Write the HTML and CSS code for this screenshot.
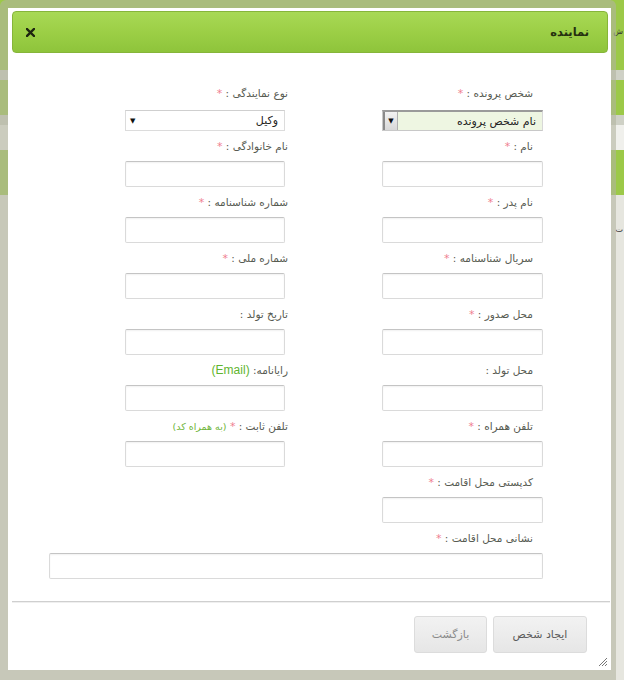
FILE: index.html
```html
<!DOCTYPE html>
<html lang="fa" dir="rtl">
<head>
<meta charset="utf-8">
<title>نماینده</title>
<link rel="stylesheet" href="styles.css">
</head>
<body>
<div class="page">
  <div class="band band-green b1"><span class="peek">ش</span></div>
  <div class="band band-gray b2"></div>
  <div class="band band-green b3"></div>
  <div class="band band-gray b4"></div>
  <div class="band band-light b5"></div>
  <div class="band band-green b6"></div>
  <div class="band band-rest"><span class="peek peek2">ت</span></div>
</div>

<div class="dialog">
  <div class="titlebar">
    <span class="title">نماینده</span>
    <span class="close" aria-label="بستن">
      <svg width="9" height="9" viewBox="0 0 9 9"><path d="M1 1 L8 8 M8 1 L1 8" stroke="#1d2410" stroke-width="2.4" stroke-linecap="square"/></svg>
    </span>
  </div>

  <div class="content">
    <div class="grid">
      <div class="field rcol">
        <div class="lbl">شخص پرونده : <span class="req">*</span></div>
        <div class="sel sel-green"><span class="sel-text">نام شخص پرونده</span><span class="sel-btn">▼</span></div>
      </div>
      <div class="field lcol">
        <div class="lbl">نوع نمایندگی : <span class="req">*</span></div>
        <div class="sel sel-plain"><span class="sel-text">وکیل</span><span class="sel-arrow">▼</span></div>
      </div>

      <div class="field rcol"><div class="lbl">نام : <span class="req">*</span></div><div class="inp"></div></div>
      <div class="field lcol"><div class="lbl">نام خانوادگی : <span class="req">*</span></div><div class="inp"></div></div>

      <div class="field rcol"><div class="lbl">نام پدر : <span class="req">*</span></div><div class="inp"></div></div>
      <div class="field lcol"><div class="lbl">شماره شناسنامه : <span class="req">*</span></div><div class="inp"></div></div>

      <div class="field rcol"><div class="lbl">سریال شناسنامه : <span class="req">*</span></div><div class="inp"></div></div>
      <div class="field lcol"><div class="lbl">شماره ملی : <span class="req">*</span></div><div class="inp"></div></div>

      <div class="field rcol"><div class="lbl">محل صدور : <span class="req">*</span></div><div class="inp"></div></div>
      <div class="field lcol"><div class="lbl">تاریخ تولد :</div><div class="inp"></div></div>

      <div class="field rcol"><div class="lbl">محل تولد :</div><div class="inp"></div></div>
      <div class="field lcol"><div class="lbl">رایانامه: <span class="hint-en">(Email)</span></div><div class="inp"></div></div>

      <div class="field rcol"><div class="lbl">تلفن همراه : <span class="req">*</span></div><div class="inp"></div></div>
      <div class="field lcol"><div class="lbl">تلفن ثابت : <span class="req">*</span> <span class="hint">(به همراه کد)</span></div><div class="inp"></div></div>

      <div class="field rcol"><div class="lbl">کدپستی محل اقامت : <span class="req">*</span></div><div class="inp"></div></div>
      <div class="field lcol empty"></div>
    </div>

    <div class="field wide"><div class="lbl">نشانی محل اقامت : <span class="req">*</span></div><div class="inp"></div></div>
  </div>

  <div class="divider"></div>

  <div class="buttons">
    <button class="btn btn-create" type="button">ایجاد شخص</button>
    <button class="btn btn-back" type="button">بازگشت</button>
  </div>

  <div class="grip">
    <svg width="10" height="10" viewBox="0 0 10 10"><path d="M9 1 L1 9 M9 4 L4 9 M9 7 L7 9" stroke="#777" stroke-width="1"/></svg>
  </div>
</div>
</body>
</html>
```

FILE: styles.css
```css
html, body {
  margin: 0;
  padding: 0;
}
body {
  width: 624px;
  height: 680px;
  overflow: hidden;
  position: relative;
  font-family: "DejaVu Sans", Tahoma, sans-serif;
  background: #e6e6de;
}

/* background page under the modal */
.page {
  width: 624px;
  height: 680px;
  display: flex;
  flex-direction: column;
}
.band { position: relative; flex: none; }
.band-green { background: #9cc948; }
.band-gray { background: #cfd1c6; }
.band-light { background: #f0f0ec; }
.b1 { height: 70px; }
.b2 { height: 10px; }
.b3 { height: 35px; }
.b4 { height: 10px; }
.b5 { height: 25px; }
.b6 { height: 45px; }
.band-rest { flex: 1; background: #e6e6df; }
.peek {
  display: block;
  text-align: right;
  font-size: 8px;
  color: #333;
  padding-top: 27px;
  padding-right: 1px;
}
.peek2 { padding-top: 30px; }

/* modal window */
.dialog {
  position: absolute;
  top: 0;
  left: 0;
  width: 616px;
  height: 680px;
  box-sizing: border-box;
  border-style: solid;
  border-width: 8px 5px 10px 8px;
  border-color: rgba(178, 180, 160, 0.6);
  border-radius: 6px 6px 0 0;
  background: #fff;
  background-clip: padding-box;
  display: flex;
  flex-direction: column;
}

.titlebar {
  margin: 3px 3px 0 4px;
  height: 42px;
  box-sizing: border-box;
  border: 1px solid #86b53a;
  border-radius: 4px;
  background: linear-gradient(#a8d955, #9ccf46 50%, #8ec43b);
  display: flex;
  align-items: center;
  justify-content: space-between;
  padding: 0 18px 0 13px;
}
.title {
  font-size: 11.5px;
  font-weight: bold;
  color: #25300f;
}
.close {
  display: flex;
  width: 9px;
  height: 9px;
}

.content {
  padding-top: 32px;
}
.grid {
  display: grid;
  grid-template-columns: 161px 160px;
  column-gap: 97px;
  padding-right: 68px;
}
.field {
  margin-bottom: 7px;
}
.lbl {
  height: 16px;
  line-height: 16px;
  font-size: 10.5px;
  color: #575b52;
  text-align: right;
  white-space: nowrap;
}
.rcol .lbl, .wide .lbl { padding-right: 10px; }
.lcol .lbl { margin-left: -6px; margin-right: -3px; }
.req {
  color: #ef7f8f;
  font-size: 11px;
}
.hint {
  color: #6fb53a;
  font-size: 9.5px;
}
.hint-en {
  font-family: "Liberation Sans", Arial, sans-serif;
  color: #5fb52e;
  font-size: 12px;
}

.inp {
  margin-top: 7px;
  height: 26px;
  box-sizing: border-box;
  border: 1px solid #dadada;
  border-top-color: #c4c4c4;
  border-radius: 2px;
  background: #fff;
  box-shadow: inset 0 1px 2px rgba(0, 0, 0, 0.06);
}

.sel {
  margin-top: 9px;
  height: 21px;
  box-sizing: border-box;
  display: flex;
  align-items: center;
  font-size: 11px;
  color: #222;
}
.sel-text { flex: 1; padding-right: 6px; }
.sel-green {
  background: #eef6e2;
  border: 1px solid #c8c8c8;
  border-top: 2px solid #9a9a9a;
  border-right-color: #d8d8d8;
}
.sel-green .sel-btn {
  width: 15px;
  height: 100%;
  box-sizing: border-box;
  border-left: 2px solid #8a8a8a;
  border-right: 1px solid #b0b0b0;
  background: linear-gradient(#f2f2f2, #d8d8d8);
  font-size: 7px;
  display: flex;
  align-items: center;
  justify-content: center;
  color: #111;
}
.sel-plain {
  border: 1px solid #dcdcdc;
  border-top-color: #cfcfcf;
  background: #fff;
}
.sel-plain .sel-arrow {
  font-size: 7px;
  padding-left: 4px;
  color: #111;
}

.wide {
  width: 494px;
  margin-right: 68px;
}

.divider {
  margin: 15px 1px 0 4px;
  height: 1px;
  background: #cfcfcf;
  border-bottom: 1px solid #efefef;
}

.buttons {
  display: flex;
  gap: 6px;
  padding: 13px 24px 0 0;
}
.btn {
  height: 37px;
  box-sizing: border-box;
  border: 1px solid #dcdcdc;
  border-radius: 3px;
  background: linear-gradient(#f2f2f2, #e6e6e6);
  font-family: "DejaVu Sans", Tahoma, sans-serif;
  font-size: 11px;
  color: #777;
  padding: 0;
}
.btn-create { width: 94px; color: #5a5a5a; }
.btn-back { width: 73px; color: #8a8a8a; }

.grip {
  margin-top: auto;
  align-self: flex-start;
  display: flex;
  padding: 0 3px 3px 0;
}
```
